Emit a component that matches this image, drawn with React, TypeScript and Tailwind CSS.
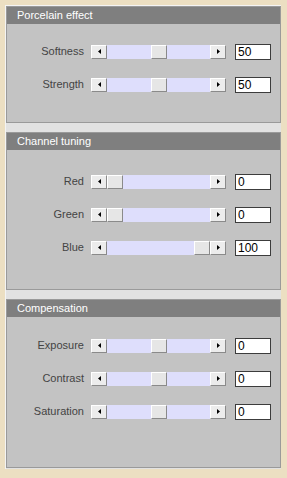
import React from 'react';

type Row = { label: string; value: number; pos: number };

const font = { fontFamily: '"Liberation Sans", Arial, sans-serif' };

function Arrow({ dir }: { dir: 'left' | 'right' }) {
  return (
    <div className="w-[16px] h-[14px] shrink-0 bg-[#ececec] border border-t-white border-l-white border-b-[#8a8a8a] border-r-[#8a8a8a] flex items-center justify-center">
      <svg width="3" height="5" viewBox="0 0 3 5">
        {dir === 'left' ? <path d="M3 0 L0 2.5 L3 5 Z" fill="#000" /> : <path d="M0 0 L3 2.5 L0 5 Z" fill="#000" />}
      </svg>
    </div>
  );
}

function Slider({ pos }: { pos: number }) {
  // track is 103px, thumb 16px
  const left = Math.round((pos / 100) * (103 - 16));
  return (
    <div className="flex items-center w-[135px] h-[14px]">
      <Arrow dir="left" />
      <div className="relative flex-1 h-[14px] bg-[#dedefc]">
        <div
          className="absolute top-0 w-[16px] h-[14px] bg-[#e6e6e6] border border-t-white border-l-white border-b-[#8a8a8a] border-r-[#8a8a8a]"
          style={{ left }}
        />
      </div>
      <Arrow dir="right" />
    </div>
  );
}

function Panel({ title, rows, height, padTop }: { title: string; rows: Row[]; height: number; padTop: number }) {
  return (
    <div className="border border-[#9a9a9a] bg-[#c3c3c3]" style={{ height }}>
      <div className="h-[17px] bg-[#7f7f7f] text-white text-[11px] leading-[17px] pl-[10px]">{title}</div>
      <div className="flex flex-col gap-[18px]" style={{ paddingTop: padTop }}>
        {rows.map((r) => (
          <div key={r.label} className="flex items-center h-[15px]">
            <div className="w-[78px] text-right text-[11px] text-[#444] pr-[1px]">{r.label}</div>
            <div className="ml-[6px]">
              <Slider pos={r.pos} />
            </div>
            <div className="ml-[9px] w-[36px] h-[16px] bg-white border border-[#3c3c3c] text-[12px] leading-[14px] pl-[2px] text-black">
              {r.value}
            </div>
          </div>
        ))}
      </div>
    </div>
  );
}

export default function App() {
  return (
    <div className="w-[287px] h-[478px] bg-[#ecdfc2] pt-[5px] pl-[5px]" style={font}>
      <div className="w-[276px] h-[464px] bg-[#e2e2e2] border-l border-t border-[#f4f4f4] flex flex-col gap-[9px]">
        <Panel
          title="Porcelain effect"
          height={117}
          padTop={20}
          rows={[
            { label: 'Softness', value: 50, pos: 50 },
            { label: 'Strength', value: 50, pos: 50 },
          ]}
        />
        <Panel
          title="Channel tuning"
          height={158}
          padTop={24}
          rows={[
            { label: 'Red', value: 0, pos: 0 },
            { label: 'Green', value: 0, pos: 0 },
            { label: 'Blue', value: 100, pos: 100 },
          ]}
        />
        <Panel
          title="Compensation"
          height={169}
          padTop={21}
          rows={[
            { label: 'Exposure', value: 0, pos: 50 },
            { label: 'Contrast', value: 0, pos: 50 },
            { label: 'Saturation', value: 0, pos: 50 },
          ]}
        />
      </div>
    </div>
  );
}
